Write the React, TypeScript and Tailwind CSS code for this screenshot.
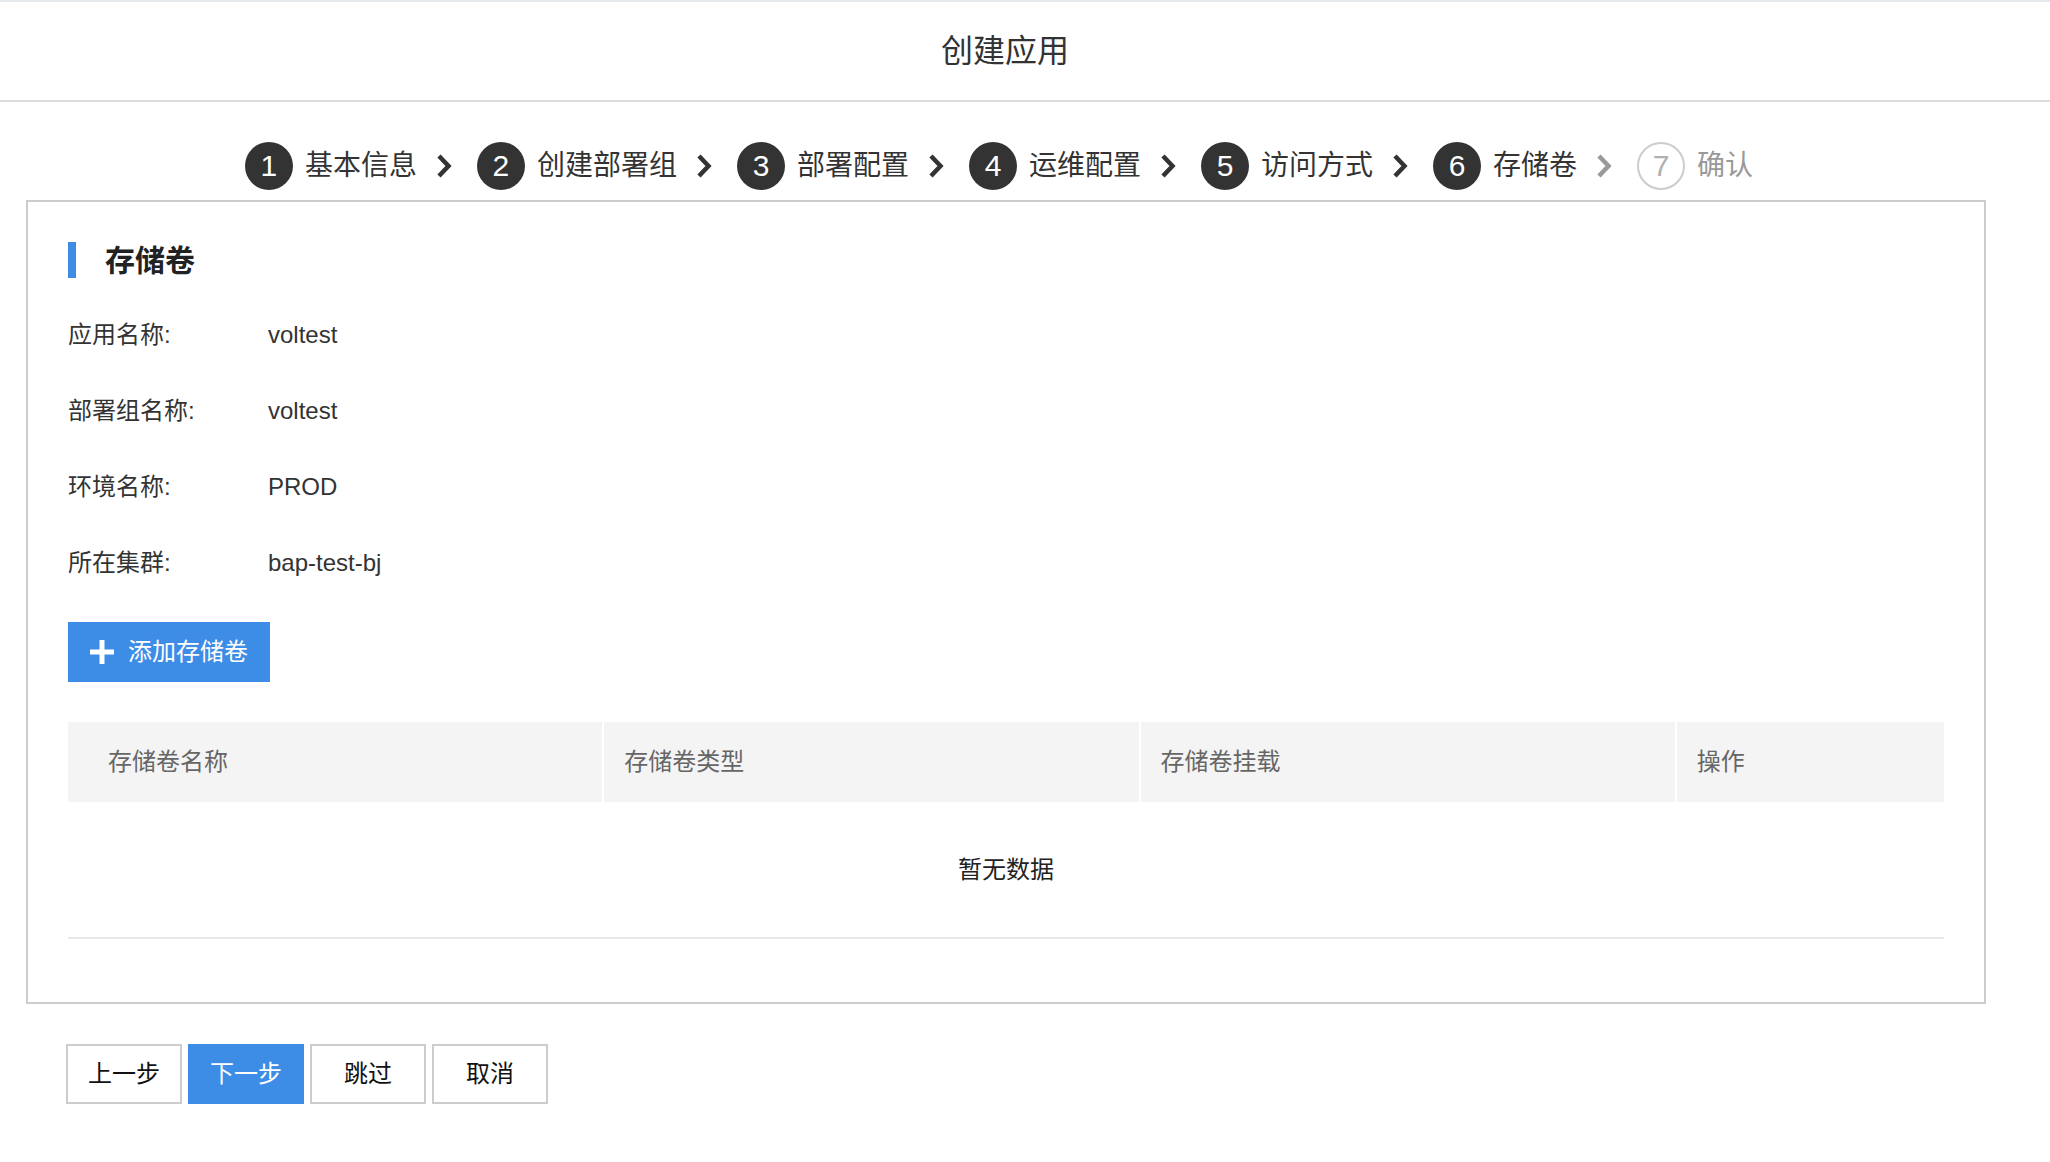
import React from "react"

type Step = { no: number; label: string; done: boolean }

const steps: Step[] = [
  { no: 1, label: "基本信息", done: true },
  { no: 2, label: "创建部署组", done: true },
  { no: 3, label: "部署配置", done: true },
  { no: 4, label: "运维配置", done: true },
  { no: 5, label: "访问方式", done: true },
  { no: 6, label: "存储卷", done: true },
  { no: 7, label: "确认", done: false },
]

const info = [
  { label: "应用名称:", value: "voltest" },
  { label: "部署组名称:", value: "voltest" },
  { label: "环境名称:", value: "PROD" },
  { label: "所在集群:", value: "bap-test-bj" },
]

const Chevron = ({ muted }: { muted?: boolean }) => (
  <svg width="16" height="24" viewBox="0 0 16 24" className="ml-[19px] mr-[25px] shrink-0">
    <polyline
      points="3,2 12.5,12 3,22"
      fill="none"
      stroke={muted ? "#9a9a9a" : "#333333"}
      strokeWidth="4.5"
    />
  </svg>
)

const Steps = () => (
  <div className="flex items-center justify-center mt-[40px] h-[48px] pr-[14px]">
    {steps.map((s, i) => (
      <React.Fragment key={s.no}>
        <div className="flex items-center">
          <div
            className={
              s.done
                ? "w-[48px] h-[48px] rounded-full bg-[#333333] text-white flex items-center justify-center text-[30px] leading-none"
                : "w-[48px] h-[48px] rounded-full border-2 border-[#cccccc] text-[#b0b0b0] flex items-center justify-center text-[30px] leading-none"
            }
          >
            {s.no}
          </div>
          <span className={s.done ? "ml-3 text-[28px] text-[#333333]" : "ml-3 text-[28px] text-[#999999]"}>
            {s.label}
          </span>
        </div>
        {i < steps.length - 1 && <Chevron muted={!steps[i + 1].done} />}
      </React.Fragment>
    ))}
  </div>
)

export default function App() {
  return (
    <div className="w-full min-h-[1162px] bg-white font-['Liberation_Sans','Noto_Sans_CJK_SC',sans-serif] text-[#333333]">
      {/* header */}
      <div className="h-[102px] border-t-2 border-b-2 border-t-[#e6e9ec] border-b-[#dddddd] flex items-center justify-center pr-[40px]">
        <h1 className="text-[32px] text-[#333333] font-normal">创建应用</h1>
      </div>

      <div className="w-[2012px] px-[26px]">
        <Steps />

        {/* card */}
        <div className="mt-[10px] border-2 border-[#cccccc] px-10 pt-10 pb-[63px]">
          <div className="flex items-center h-9">
            <div className="w-2 h-9 bg-[#3d8de6]" />
            <h2 className="ml-[29px] text-[30px] font-bold text-[#222222]">存储卷</h2>
          </div>

          <div className="mt-[19px] flex flex-col">
            {info.map((row) => (
              <div key={row.label} className="h-[76px] flex items-center text-[24px]">
                <span className="w-[200px] text-[#333333]">{row.label}</span>
                <span className="text-[#333333]">{row.value}</span>
              </div>
            ))}
          </div>

          <button className="mt-[21px] h-[60px] w-[202px] bg-[#3d8de6] text-white flex items-center pl-[21px] text-[24px]">
            <svg width="26" height="26" viewBox="0 0 26 26" className="shrink-0">
              <path d="M13 1v24M1 13h24" stroke="white" strokeWidth="5" />
            </svg>
            <span className="ml-[13px]">添加存储卷</span>
          </button>

          {/* table */}
          <div className="mt-10">
            <div className="grid grid-cols-[2fr_2fr_2fr_1fr] gap-[2px] h-[80px] text-[24px] text-[#666666]">
              <div className="bg-[#f4f4f4] flex items-center pl-10">存储卷名称</div>
              <div className="bg-[#f4f4f4] flex items-center pl-5">存储卷类型</div>
              <div className="bg-[#f4f4f4] flex items-center pl-5">存储卷挂载</div>
              <div className="bg-[#f4f4f4] flex items-center pl-5">操作</div>
            </div>
            <div className="h-[137px] border-b-2 border-[#e8e8e8] flex items-center justify-center text-[24px] text-[#222222]">
              暂无数据
            </div>
          </div>
        </div>

        {/* footer actions */}
        <div className="mt-10 ml-10 flex gap-[6px]">
          <button className="w-[116px] h-[60px] border-2 border-[#cccccc] text-[24px] text-[#111111]">上一步</button>
          <button className="w-[116px] h-[60px] bg-[#3d8de6] text-[24px] text-white">下一步</button>
          <button className="w-[116px] h-[60px] border-2 border-[#cccccc] text-[24px] text-[#111111]">跳过</button>
          <button className="w-[116px] h-[60px] border-2 border-[#cccccc] text-[24px] text-[#111111]">取消</button>
        </div>
      </div>
    </div>
  )
}
